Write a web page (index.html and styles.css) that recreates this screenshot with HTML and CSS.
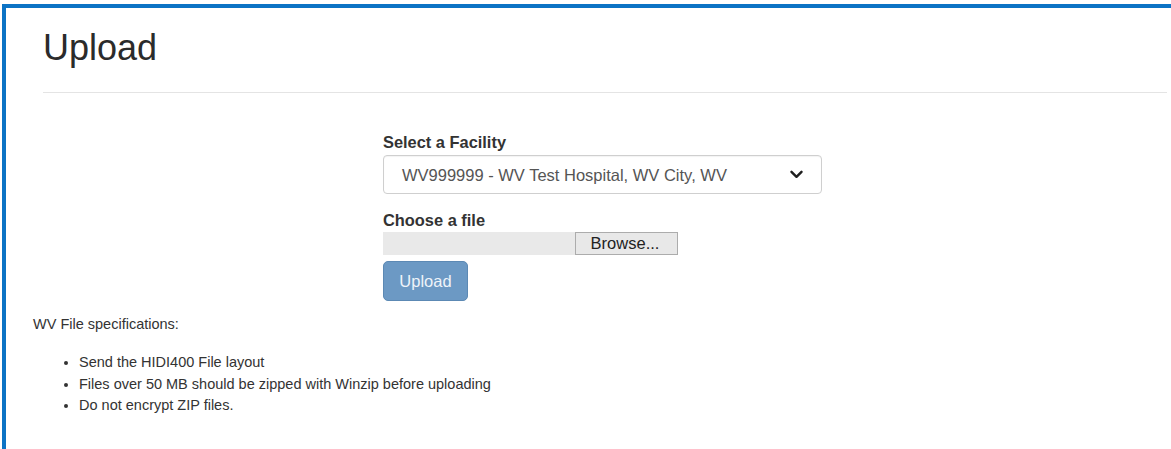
FILE: index.html
```html
<!DOCTYPE html>
<html lang="en">
<head>
<meta charset="utf-8">
<title>Upload</title>
<link rel="stylesheet" href="styles.css">
</head>
<body>
<div class="frame">
  <div class="page">
    <header class="page-header">
      <h1 class="page-title">Upload</h1>
    </header>

    <form class="upload-form">
      <div class="form-group">
        <label class="form-label">Select a Facility</label>
        <div class="select-box">
          <span class="select-value">WV999999 - WV Test Hospital, WV City, WV</span>
          <svg class="select-caret" width="13" height="9" viewBox="0 0 13 9" aria-hidden="true">
            <path d="M1.5 1.8 L6.5 6.8 L11.5 1.8" fill="none" stroke="#1f1f1f" stroke-width="2.4" stroke-linecap="round" stroke-linejoin="round"/>
          </svg>
        </div>
      </div>

      <div class="form-group">
        <label class="form-label label-file">Choose a file</label>
        <div class="file-input">
          <span class="file-name"></span>
          <span class="file-browse">Browse...</span>
        </div>
      </div>

      <button type="button" class="btn-upload" disabled>Upload</button>
    </form>

    <section class="specs">
      <p class="specs-title">WV File specifications:</p>
      <ul class="specs-list">
        <li>Send the HIDI400 File layout</li>
        <li>Files over 50 MB should be zipped with Winzip before uploading</li>
        <li>Do not encrypt ZIP files.</li>
      </ul>
    </section>
  </div>
</div>
</body>
</html>
```

FILE: styles.css
```css
html, body {
  margin: 0;
  padding: 0;
  background: #ffffff;
}

body {
  font-family: "Liberation Sans", Arial, Helvetica, sans-serif;
  color: #333333;
  height: 449px;
  overflow: hidden;
}

/* blue frame around the page body: top and left edges only */
.frame {
  margin: 4px 0 0 2px;
  border-top: 4px solid #0c73c5;
  border-left: 4px solid #0c73c5;
  height: 445px;
  box-sizing: border-box;
}

.page {
  padding: 0 4px 0 27px;
}

.page-header {
  margin: 20px 0 0 10px;
  padding-bottom: 24px;
  border-bottom: 1px solid #e4e4e4;
}

.page-title {
  margin: 0;
  font-size: 36px;
  font-weight: 400;
  line-height: 40px;
  color: #2b2b2b;
}

/* facility / file form */
.upload-form {
  width: 439px;
  margin: 39px 0 0 350px;
  display: flex;
  flex-direction: column;
  align-items: flex-start;
}

.form-group {
  width: 100%;
  display: flex;
  flex-direction: column;
}

.form-label {
  font-size: 16.4px;
  font-weight: 700;
  line-height: 20px;
  color: #333333;
}

.select-box {
  margin-top: 3px;
  height: 39px;
  box-sizing: border-box;
  border: 1px solid #cfcfcf;
  border-radius: 4px;
  box-shadow: inset 0 1px 1px rgba(0, 0, 0, 0.05);
  display: flex;
  align-items: center;
  justify-content: space-between;
  padding: 0 18px 0 18px;
}

.select-value {
  font-size: 16.5px;
  color: #555555;
  line-height: 20px;
}

.select-caret {
  display: block;
}

.label-file {
  margin-top: 16px;
}

.file-input {
  margin-top: 2px;
  width: 295px;
  height: 23px;
  display: flex;
}

.file-name {
  width: 192px;
  background: #e9e9e9;
}

.file-browse {
  flex: 1;
  box-sizing: border-box;
  background: #e8e8e8;
  border: 1px solid #acacac;
  font-size: 16.5px;
  line-height: 20px;
  color: #222222;
  text-align: center;
  padding-right: 3px;
}

.btn-upload {
  margin-top: 6px;
  width: 85px;
  height: 40px;
  box-sizing: border-box;
  background: #6c99c4;
  border: 1px solid #5c89b4;
  border-radius: 5px;
  color: #eef3f9;
  font-family: "Liberation Sans", Arial, Helvetica, sans-serif;
  font-size: 16.5px;
  padding: 0;
  cursor: not-allowed;
}

/* file specifications */
.specs {
  margin-top: 13px;
  font-size: 14.5px;
  color: #333333;
}

.specs-title {
  margin: 0;
  line-height: 20px;
}

.specs-list {
  margin: 18px 0 0 0;
  padding-left: 46px;
  line-height: 21.5px;
}
```
